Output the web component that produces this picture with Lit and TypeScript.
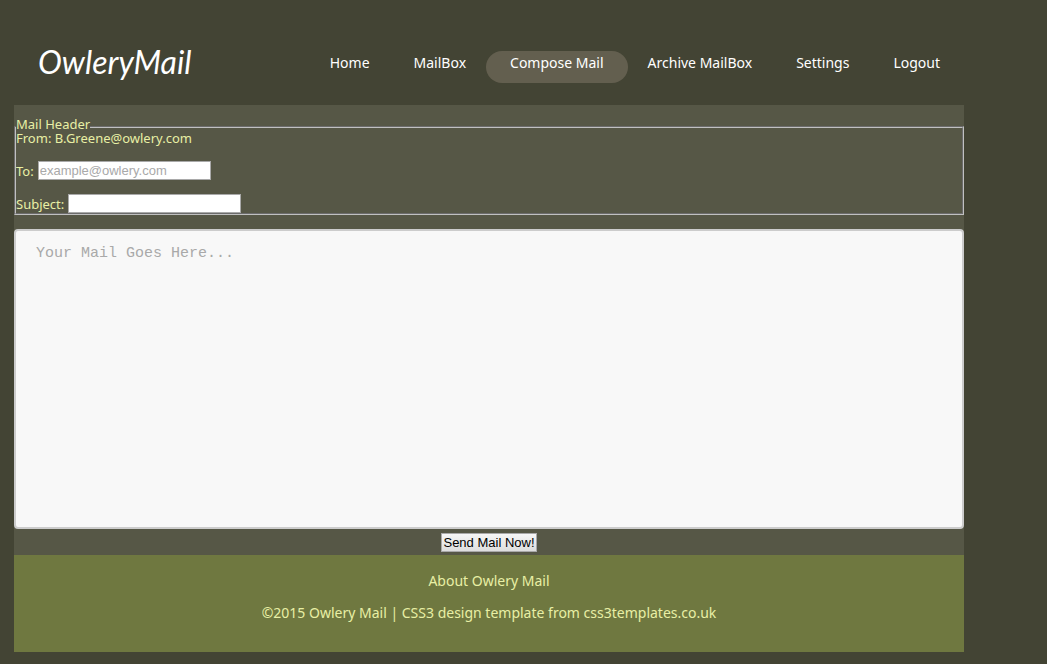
import { LitElement, html, css } from "lit";
import { customElement, state } from "lit/decorators.js";

const LINKS = ["Home", "MailBox", "Compose Mail", "Archive MailBox", "Settings", "Logout"];

@customElement("app-root")
export class AppRoot extends LitElement {
  @state() private current = "Compose Mail";

  static styles = css`
    :host {
      display: block;
      min-height: 100vh;
      box-sizing: border-box;
      padding: 0 14px 12px;
      background: #434434;
      color: #e8efa5;
      font: 14px/16px "Noto Sans", "Open Sans", sans-serif;
    }
    * {
      box-sizing: border-box;
    }
    .page {
      max-width: 950px;
    }
    .top {
      display: flex;
      justify-content: space-between;
      align-items: flex-start;
      min-height: 105px;
      padding: 32px 0 0 24px;
    }
    .logo {
      color: #fff;
      font: italic 400 32px/60px Lato, sans-serif;
      text-decoration: none;
      white-space: nowrap;
    }
    .menu {
      display: flex;
      margin: 19px 0 0;
      padding: 0 24px 0 0;
      gap: 44px;
      list-style: none;
    }
    .menu a {
      display: block;
      height: 32px;
      margin: 0 -24px;
      padding: 0 24px;
      border-radius: 16px;
      color: #fff;
      line-height: 24px;
      text-decoration: none;
      white-space: nowrap;
    }
    .menu a.on {
      background: #635f4f;
    }
    .body {
      padding-top: 12px;
      background: #565746;
    }
    .head {
      margin: 0;
      padding: 0;
      border: 2px groove #c0c0c0;
      min-width: 0;
      font-size: 13px;
      line-height: 14px;
    }
    .head legend {
      padding: 0 0 5px;
    }
    .row {
      display: flex;
      align-items: center;
      gap: 4px;
      margin-top: 14px;
    }
    .from {
      margin: -5px 0 16px;
    }
    .row input {
      width: 173px;
      height: 19px;
      padding: 1px;
      border: 1px solid #a9a9a9;
      border-radius: 0;
      background: #fff;
      color: #000;
      font: 13px "Liberation Sans", Arial, sans-serif;
    }
    ::placeholder {
      color: #a9a9a9;
      opacity: 1;
    }
    .mail {
      display: block;
      width: 100%;
      height: 300px;
      margin: 14px 0 4px;
      padding: 13px 20px;
      border: 2px solid #ccc;
      border-radius: 4px;
      background: #f8f8f8;
      color: #333;
      font: 15px/20px "Liberation Mono", monospace;
      resize: none;
    }
    .actions {
      display: flex;
      justify-content: center;
      padding-bottom: 3px;
    }
    .send {
      height: 19px;
      padding: 0 1px;
      border: 1px solid #a9a9a9;
      border-radius: 0;
      background: linear-gradient(#f6f6f6, #dedede);
      color: #000;
      font: 13px "Liberation Sans", Arial, sans-serif;
    }
    .foot {
      display: grid;
      gap: 12px;
      padding: 16px 0 29px;
      background: #6f7840;
      text-align: center;
    }
    .foot p {
      margin: 0;
      line-height: 20px;
    }
    .foot a {
      color: inherit;
      text-decoration: none;
    }
  `;

  render() {
    return html`
      <div class="page">
        <header class="top">
          <a class="logo" href="#home">OwleryMail</a>
          <nav>
            <ul class="menu">
              ${LINKS.map(
                (name) => html`<li>
                  <a href="#" class=${name === this.current ? "on" : ""} @click=${() => (this.current = name)}>${name}</a>
                </li>`
              )}
            </ul>
          </nav>
        </header>
        <form class="body" @submit=${(e: Event) => e.preventDefault()}>
          <fieldset class="head">
            <legend>Mail Header</legend>
            <p class="from">From: B.Greene@owlery.com</p>
            <div class="row">
              <label for="to">To:</label>
              <input id="to" type="email" placeholder="example@owlery.com" />
            </div>
            <div class="row">
              <label for="subject">Subject:</label>
              <input id="subject" type="text" />
            </div>
          </fieldset>
          <textarea class="mail" aria-label="Mail text" placeholder="Your Mail Goes Here..."></textarea>
          <div class="actions"><button class="send" type="submit">Send Mail Now!</button></div>
        </form>
        <footer class="foot">
          <p><a href="#about">About Owlery Mail</a></p>
          <p>©2015 Owlery Mail | CSS3 design template from <a href="#template">css3templates.co.uk</a></p>
        </footer>
      </div>
    `;
  }
}
